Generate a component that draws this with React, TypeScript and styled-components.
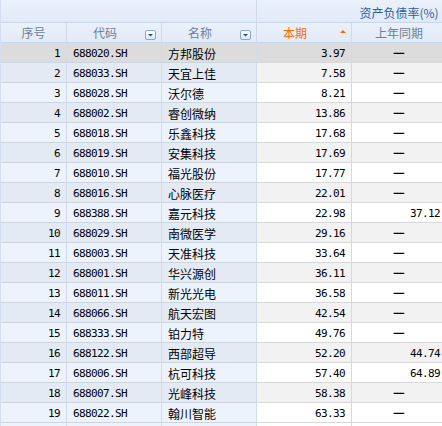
import React from "react";
import styled, { createGlobalStyle, css } from "styled-components";

const Global = createGlobalStyle`
  html, body { margin: 0; padding: 0; background: #ffffff; overflow: hidden; }
  body { font-family: "Noto Sans CJK SC", "Liberation Sans", sans-serif; }
`;

type Row = { code: string; name: string; cur: string; prev: string | null };

const rows: Row[] = [
  { code: "688020.SH", name: "方邦股份", cur: "3.97", prev: null },
  { code: "688033.SH", name: "天宜上佳", cur: "7.58", prev: null },
  { code: "688028.SH", name: "沃尔德", cur: "8.21", prev: null },
  { code: "688002.SH", name: "睿创微纳", cur: "13.86", prev: null },
  { code: "688018.SH", name: "乐鑫科技", cur: "17.68", prev: null },
  { code: "688019.SH", name: "安集科技", cur: "17.69", prev: null },
  { code: "688010.SH", name: "福光股份", cur: "17.77", prev: null },
  { code: "688016.SH", name: "心脉医疗", cur: "22.01", prev: null },
  { code: "688388.SH", name: "嘉元科技", cur: "22.98", prev: "37.12" },
  { code: "688029.SH", name: "南微医学", cur: "29.16", prev: null },
  { code: "688003.SH", name: "天准科技", cur: "33.64", prev: null },
  { code: "688001.SH", name: "华兴源创", cur: "36.11", prev: null },
  { code: "688011.SH", name: "新光光电", cur: "36.58", prev: null },
  { code: "688066.SH", name: "航天宏图", cur: "42.54", prev: null },
  { code: "688333.SH", name: "铂力特", cur: "49.76", prev: null },
  { code: "688122.SH", name: "西部超导", cur: "52.20", prev: "44.74" },
  { code: "688006.SH", name: "杭可科技", cur: "57.40", prev: "64.89" },
  { code: "688007.SH", name: "光峰科技", cur: "58.38", prev: null },
  { code: "688022.SH", name: "翰川智能", cur: "63.33", prev: null },
];

const Viewport = styled.div`
  width: 442px;
  height: 426px;
  overflow: hidden;
  border-left: 1px solid #d3dff0;
  box-sizing: border-box;
`;

const Grid = styled.div`
  display: grid;
  grid-template-columns: 66px repeat(5, 95px);
  grid-auto-rows: 20px;
  grid-template-rows: 23px 20px;
  width: 541px;
`;

const HeadCell = styled.div<{ $span?: number; $pad?: number }>`
  box-sizing: border-box;
  grid-column: span ${(p) => p.$span ?? 1};
  background: linear-gradient(#eaf1fb, #e1eaf7);
  border-right: 1px solid #d0dbea;
  border-bottom: 1px solid #c8d6ea;
  display: flex;
  align-items: center;
  justify-content: center;
  position: relative;
  padding-right: ${(p) => p.$pad ?? 0}px;
  font-size: 12px;
  line-height: 14px;
  color: #6f7f96;
  white-space: nowrap;
`;

const GroupTitle = styled.span`
  color: #2f5e9e;
  padding-top: 3px;
`;

const SortTitle = styled.span`
  color: #ff6a00;
`;

const DropBtn = styled.span`
  position: absolute;
  right: 5px;
  top: 5px;
  width: 11px;
  height: 10px;
  display: block;
`;

const SortMark = styled.span`
  position: absolute;
  right: 5px;
  top: 7px;
  width: 0;
  height: 0;
  border-left: 3px solid transparent;
  border-right: 3px solid transparent;
  border-bottom: 3px solid #ff6a00;
`;

const Cell = styled.div<{
  $frozen?: boolean;
  $alt?: boolean;
  $sel?: boolean;
  $align: "left" | "right" | "center";
  $mono?: boolean;
}>`
  box-sizing: border-box;
  border-right: 1px solid ${(p) => (p.$frozen ? "#d2dbe7" : "#d8d8d8")};
  border-bottom: 1px solid ${(p) => (p.$frozen ? "#cdd5df" : "#d8d8d8")};
  background: ${(p) =>
    p.$sel ? "#dcdcdc" : p.$frozen ? (p.$alt ? "#e3eaf4" : "#edf3fc") : p.$alt ? "#f2f2f2" : "#ffffff"};
  padding: 2px 6px 0 6px;
  text-align: ${(p) => p.$align};
  font-size: 12px;
  line-height: 18px;
  color: #000;
  white-space: nowrap;
  overflow: hidden;
  ${(p) =>
    p.$mono &&
    css`
      font-family: "DejaVu Sans Mono", "Liberation Mono", monospace;
      font-size: 11px;
      letter-spacing: -0.62px;
    `}
`;

const Dash = styled.span`
  display: inline-block;
  position: relative;
  top: -1px;
  line-height: 16px;
  font-family: "Noto Sans CJK SC", sans-serif;
  font-size: 13px;
  font-weight: 700;
  letter-spacing: 0;
`;

const Filler = styled.div<{ $frozen?: boolean }>`
  box-sizing: border-box;
  border-right: 1px solid ${(p) => (p.$frozen ? "#d2dbe7" : "#d8d8d8")};
  background: ${(p) => (p.$frozen ? "#edf3fc" : "#ffffff")};
`;

const DropIcon = () => (
  <DropBtn>
    <svg width="11" height="10" viewBox="0 0 11 10">
      <defs>
        <linearGradient id="dg" x1="0" y1="0" x2="0" y2="1">
          <stop offset="0" stopColor="#ffffff" />
          <stop offset="1" stopColor="#dbe6f6" />
        </linearGradient>
      </defs>
      <rect x="0.5" y="0.5" width="10" height="9" rx="1.5" fill="url(#dg)" stroke="#8ea6c9" />
      <path d="M3 4 H8 L5.5 6.5 Z" fill="#1d4f9c" />
    </svg>
  </DropBtn>
);

export default function App() {
  return (
    <>
      <Global />
      <Viewport>
        <Grid>
          <HeadCell $span={3} />
          <HeadCell $span={3}>
            <GroupTitle>资产负债率(%)</GroupTitle>
          </HeadCell>

          <HeadCell>序号</HeadCell>
          <HeadCell $pad={18}>
            代码
            <DropIcon />
          </HeadCell>
          <HeadCell $pad={18}>
            名称
            <DropIcon />
          </HeadCell>
          <HeadCell $pad={18}>
            <SortTitle>本期</SortTitle>
            <SortMark />
          </HeadCell>
          <HeadCell>上年同期</HeadCell>
          <HeadCell />

          {rows.map((r, i) => {
            const alt = (i + 1) % 2 === 0;
            const sel = i === 0;
            return (
              <React.Fragment key={r.code}>
                <Cell $frozen $alt={alt} $sel={sel} $align="right" $mono>
                  {i + 1}
                </Cell>
                <Cell $frozen $alt={alt} $sel={sel} $align="left" $mono>
                  {r.code}
                </Cell>
                <Cell $frozen $alt={alt} $sel={sel} $align="left">
                  {r.name}
                </Cell>
                <Cell $alt={alt} $sel={sel} $align="right" $mono>
                  {r.cur}
                </Cell>
                <Cell $alt={alt} $sel={sel} $align={r.prev ? "right" : "center"} $mono>
                  {r.prev ?? <Dash>—</Dash>}
                </Cell>
                <Cell $alt={alt} $sel={sel} $align="right" $mono />
              </React.Fragment>
            );
          })}
          <Filler $frozen />
          <Filler $frozen />
          <Filler $frozen />
          <Filler />
          <Filler />
          <Filler />
        </Grid>
      </Viewport>
    </>
  );
}
